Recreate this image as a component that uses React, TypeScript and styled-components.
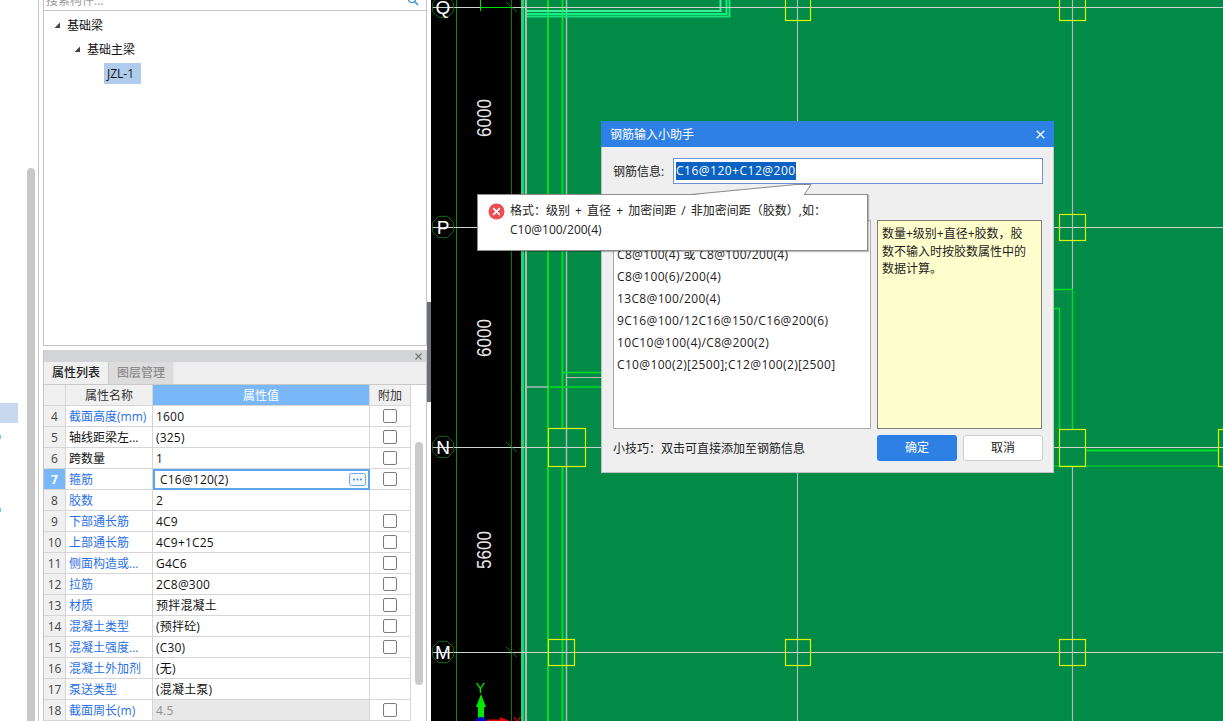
import React from "react";
import styled, { createGlobalStyle } from "styled-components";

const Global = createGlobalStyle`
  html, body { margin: 0; padding: 0; background: #fff; }
  body { font-family: "Open Sans", "Noto Sans CJK SC", sans-serif; font-size: 12px; color: #222; }
  * { box-sizing: border-box; }
`;

const Page = styled.div`
  width: 1223px;
  height: 721px;
  display: flex;
  overflow: hidden;
`;

const Strip = styled.div`
  width: 39px;
  height: 721px;
  border-right: 1px solid #c6c6c6;
  display: flex;
  background: #fff;
`;
const StripList = styled.div`
  width: 27px;
  padding-top: 403px;
`;
const StripHighlight = styled.div`
  width: 18px;
  height: 20px;
  background: #c8d9ef;
`;
const StripMark = styled.div<{ $top: number }>`
  width: 1px;
  height: 4px;
  margin-top: ${(p) => p.$top}px;
  background: #5fd0f5;
`;
const StripThumb = styled.div`
  width: 8px;
  height: 553px;
  margin-top: 168px;
  background: #c8c8c8;
  border-radius: 4px 4px 0 0;
`;

const Side = styled.div`
  width: 388px;
  height: 721px;
  padding-left: 4px;
  background: #fff;
  flex: none;
`;

const TreePanel = styled.div`
  width: 384px;
  height: 346px;
  border: 1px solid #c4c4c4;
  border-top: none;
`;
const SearchBar = styled.div`
  height: 11px;
  border-bottom: 1px solid #c4c4c4;
  overflow: hidden;
  display: flex;
  align-items: flex-end;
  justify-content: space-between;
  padding: 0 7px 1px 2px;
  color: #9a9a9a;
  line-height: 16px;
  white-space: nowrap;
`;
const SearchGlyph = styled.svg`
  width: 12px;
  height: 12px;
  flex: none;
  margin-bottom: 3px;
`;
const TreeBody = styled.div`
  padding-top: 2px;
`;
const TreeRow = styled.div<{ $indent: number }>`
  height: 24px;
  display: flex;
  align-items: center;
  padding-left: ${(p) => p.$indent}px;
  color: #111;
`;
const Caret = styled.svg`
  width: 7px;
  height: 7px;
  margin-right: 6px;
  flex: none;
`;
const TreeSelected = styled.span`
  display: block;
  height: 21px;
  line-height: 21px;
  padding: 0 3px;
  background: #b0ccec;
  width: 37px;
`;

const PropPanel = styled.div`
  width: 384px;
  margin-top: 4px;
  border-left: 1px solid #c4c4c4;
  border-right: 1px solid #c4c4c4;
`;
const PanelTitle = styled.div`
  height: 12px;
  background: #d3d4d8;
  display: flex;
  align-items: center;
  justify-content: flex-end;
  padding-right: 4px;
`;
const SmallClose = styled.svg`
  width: 7px;
  height: 7px;
`;
const TabBar = styled.div`
  height: 23px;
  background: #eeeeee;
  border-bottom: 1px solid #c9c9c9;
  display: flex;
`;
const Tab = styled.div<{ $active?: boolean }>`
  width: 65px;
  height: 22px;
  line-height: 22px;
  text-align: center;
  background: ${(p) => (p.$active ? "#f0f0f0" : "#dcdcdc")};
  color: ${(p) => (p.$active ? "#222" : "#8c8c8c")};
  font-weight: 500;
  border-right: 1px solid ${(p) => (p.$active ? "#c9c9c9" : "#e8e8e8")};
`;
const TableWrap = styled.div`
  display: flex;
  background: #fff;
`;
const Table = styled.div`
  width: 367px;
  display: grid;
  grid-template-columns: 22px 87px 217px 41px;
  grid-auto-rows: 21px;
`;
const Cell = styled.div`
  border-right: 1px solid #d6d6d6;
  border-bottom: 1px solid #d6d6d6;
  display: flex;
  align-items: center;
  white-space: nowrap;
  overflow: hidden;
`;
const HeadCell = styled(Cell)<{ $accent?: boolean }>`
  justify-content: center;
  background: ${(p) => (p.$accent ? "#7ab7f8" : "#f0f0f0")};
  color: ${(p) => (p.$accent ? "#fff" : "#333")};
`;
const IndexCell = styled(Cell)<{ $current?: boolean }>`
  justify-content: center;
  background: ${(p) => (p.$current ? "#7ab7f8" : "#f0f0f0")};
  color: ${(p) => (p.$current ? "#fff" : "#444")};
  font-weight: ${(p) => (p.$current ? 700 : 400)};
`;
const NameCell = styled(Cell)<{ $link?: boolean }>`
  padding-left: 3px;
  color: ${(p) => (p.$link ? "#2b6fe6" : "#111")};
`;
const ValueCell = styled(Cell)<{ $locked?: boolean }>`
  padding-left: 3px;
  letter-spacing: 0.2px;
  background: ${(p) => (p.$locked ? "#e8e8e8" : "#fff")};
  color: ${(p) => (p.$locked ? "#8f8f8f" : "#111")};
`;
const EditCell = styled(Cell)`
  border: 2px solid #5fa3f2;
  padding: 0 2px 0 5px;
  justify-content: space-between;
  letter-spacing: 0.2px;
  color: #111;
`;
const MoreButton = styled.svg`
  width: 17px;
  height: 13px;
  flex: none;
`;
const ExtraCell = styled(Cell)`
  justify-content: center;
  background: #fff;
`;
const Check = styled.span`
  width: 14px;
  height: 14px;
  border: 1px solid #7c7c7c;
  border-radius: 2px;
  background: #fff;
`;
const TableScroll = styled.div`
  flex: 1;
  padding: 57px 0 0 4px;
`;
const TableThumb = styled.div`
  width: 8px;
  height: 243px;
  border-radius: 4px;
  background: #cacaca;
`;

const Splitter = styled.div`
  width: 4px;
  height: 721px;
  background: #fff;
  padding-top: 302px;
  flex: none;
`;
const SplitterHandle = styled.div`
  height: 100px;
  background: #6a7078;
`;

const Canvas = styled.div`
  position: relative;
  flex: 1;
  height: 721px;
  background: #000;
  overflow: hidden;
`;
const Drawing = styled.svg`
  display: block;
  width: 792px;
  height: 721px;
`;

const Dialog = styled.div`
  position: absolute;
  left: 170px;
  top: 121px;
  width: 453px;
  height: 352px;
  background: #efefef;
  border: 1px solid #c2c2c2;
  border-top: none;
`;
const DialogTitle = styled.div`
  height: 26px;
  margin: 0 -1px;
  background: #2f80e4;
  color: #fff;
  display: flex;
  align-items: center;
  justify-content: space-between;
  padding: 0 9px 0 9px;
`;
const DialogClose = styled.svg`
  width: 9px;
  height: 9px;
`;
const DialogBody = styled.div`
  padding: 11px 10px 0 11px;
`;
const InfoRow = styled.div`
  display: flex;
  align-items: center;
  height: 26px;
  color: #222;
`;
const InfoLabel = styled.span`
  width: 60px;
  flex: none;
`;
const InfoInput = styled.div`
  flex: 1;
  height: 26px;
  background: #fff;
  border: 1px solid #6f8fd6;
  padding-left: 2px;
  display: flex;
  align-items: center;
`;
const Selected = styled.span`
  background: #0a63c2;
  color: #fff;
  line-height: 18px;
  letter-spacing: 0.5px;
`;
const Panes = styled.div`
  margin-top: 36px;
  display: grid;
  grid-template-columns: 258px 165px;
  gap: 6px;
  height: 209px;
`;
const ExampleList = styled.div`
  background: #fff;
  border: 1px solid #ababab;
  padding: 23px 0 0 3px;
  color: #222;
`;
const Example = styled.div`
  height: 22px;
  line-height: 21px;
  white-space: nowrap;
  letter-spacing: 0.35px;
`;
const HintBox = styled.div`
  background: #ffffcd;
  border: 1px solid #808080;
  padding: 4px 4px;
  line-height: 17.5px;
  color: #222;
`;
const DialogFooter = styled.div`
  margin-top: 6px;
  height: 26px;
  display: grid;
  grid-template-columns: 264px 80px 80px;
  align-items: center;
  color: #222;
`;
const PrimaryButton = styled.div`
  height: 26px;
  line-height: 26px;
  text-align: center;
  background: #2f80e4;
  color: #fff;
  border-radius: 3px;
`;
const SecondaryButton = styled.div`
  height: 26px;
  line-height: 24px;
  text-align: center;
  margin-left: 6px;
  width: 80px;
  background: #fff;
  border: 1px solid #cfcfcf;
  border-radius: 3px;
`;

const Tooltip = styled.div`
  position: absolute;
  left: 46px;
  top: 194px;
  width: 391px;
  height: 57px;
  background: #fff;
  border: 1px solid #8c8c8c;
  box-shadow: 1px 1px 1px rgba(0, 0, 0, 0.25);
  padding: 6px 0 0 32px;
  line-height: 19px;
  word-spacing: 2px;
  color: #222;
  white-space: nowrap;
`;
const TooltipIcon = styled.svg`
  position: absolute;
  left: 10px;
  top: 8px;
  width: 17px;
  height: 17px;
`;
const TooltipTail = styled.svg`
  position: absolute;
  left: 213px;
  top: -11px;
  width: 122px;
  height: 12px;
`;

type Prop = { n: number; name: string; value: string; link: boolean; check: boolean; edit?: boolean; locked?: boolean };

const rows: Prop[] = [
  { n: 4, name: "截面高度(mm)", value: "1600", link: true, check: true },
  { n: 5, name: "轴线距梁左...", value: "(325)", link: false, check: true },
  { n: 6, name: "跨数量", value: "1", link: false, check: true },
  { n: 7, name: "箍筋", value: "C16@120(2)", link: true, check: true, edit: true },
  { n: 8, name: "胶数", value: "2", link: true, check: false },
  { n: 9, name: "下部通长筋", value: "4C9", link: true, check: true },
  { n: 10, name: "上部通长筋", value: "4C9+1C25", link: true, check: true },
  { n: 11, name: "侧面构造或...", value: "G4C6", link: true, check: true },
  { n: 12, name: "拉筋", value: "2C8@300", link: true, check: true },
  { n: 13, name: "材质", value: "预拌混凝土", link: true, check: true },
  { n: 14, name: "混凝土类型", value: "(预拌砼)", link: true, check: true },
  { n: 15, name: "混凝土强度...", value: "(C30)", link: true, check: true },
  { n: 16, name: "混凝土外加剂", value: "(无)", link: true, check: false },
  { n: 17, name: "泵送类型", value: "(混凝土泵)", link: true, check: false },
  { n: 18, name: "截面周长(m)", value: "4.5", link: true, check: true, locked: true },
];

const examples = [
  "C8@100(4) 或 C8@100/200(4)",
  "C8@100(6)/200(4)",
  "13C8@100/200(4)",
  "9C16@100/12C16@150/C16@200(6)",
  "10C10@100(4)/C8@200(2)",
  "C10@100(2)[2500];C12@100(2)[2500]",
];

const CANVAS_GREEN = "#028a47";
const BRIGHT = "#00dc28";
const GRAY = "#aebcb2";
const YELLOW = "#dcf400";

const axes = [
  { label: "Q", y: 7 },
  { label: "P", y: 227 },
  { label: "N", y: 447 },
  { label: "M", y: 652 },
];

const spans = [
  { label: "6000", y: 118 },
  { label: "6000", y: 338 },
  { label: "5600", y: 550 },
];

const squares = [
  [785, -6, 25, 26],
  [1059, -6, 26, 26],
  [785, 214, 25, 26],
  [1059, 214, 26, 26],
  [548, 428, 37, 38],
  [1059, 429, 26, 37],
  [1218, 429, 26, 37],
  [548, 639, 26, 26],
  [785, 639, 25, 26],
  [1059, 639, 26, 26],
];

function octagon(cx: number, cy: number, r: number) {
  const pts: string[] = [];
  for (let i = 0; i < 8; i++) {
    const a = Math.PI / 8 + (i * Math.PI) / 4;
    pts.push(`${cx + r * Math.cos(a)},${cy + r * Math.sin(a)}`);
  }
  return pts.join(" ");
}

function CadDrawing() {
  return (
    <Drawing viewBox="431 0 792 721">
      <rect x="431" y="0" width="91" height="721" fill="#000" />
      <rect x="522" y="0" width="701" height="721" fill={CANVAS_GREEN} />

      <line x1="456.5" y1="0" x2="456.5" y2="721" stroke="#0a8a0a" />
      <line x1="511.5" y1="0" x2="511.5" y2="721" stroke="#0a7a0a" />
      <rect x="521" y="0" width="3" height="721" fill="#19d873" />
      <rect x="525" y="0" width="2" height="721" fill={GRAY} />
      <rect x="547" y="0" width="2" height="721" fill={BRIGHT} />
      <line x1="562.5" y1="0" x2="562.5" y2="428" stroke={BRIGHT} strokeWidth="2" />
      <line x1="562.5" y1="466" x2="562.5" y2="721" stroke={BRIGHT} strokeWidth="2" />
      <line x1="566.5" y1="0" x2="566.5" y2="721" stroke={GRAY} strokeWidth="1.5" />
      <line x1="797.5" y1="0" x2="797.5" y2="721" stroke={GRAY} strokeWidth="1.2" />
      <line x1="1072.5" y1="0" x2="1072.5" y2="289" stroke={GRAY} strokeWidth="1.2" />
      <line x1="1072.5" y1="466" x2="1072.5" y2="721" stroke={GRAY} strokeWidth="1.2" />

      <path d="M527 11 H720.5 V0" fill="none" stroke="#3cf09a" strokeWidth="2" />
      <path d="M527 14 H726.5 V0" fill="none" stroke="#10f080" strokeWidth="2" />
      <path d="M527 16.5 H729.5 V0" fill="none" stroke="#18e07a" strokeWidth="2" />

      <path d="M563 372.5 H601" stroke={BRIGHT} strokeWidth="1.5" fill="none" />
      <path d="M566 377.5 H601" stroke={GRAY} fill="none" />
      <path d="M526 387 H548" stroke={GRAY} strokeWidth="1.5" fill="none" />
      <path d="M548 387 H601" stroke={BRIGHT} strokeWidth="1.5" fill="none" />
      <path d="M1054 289.5 H1072.5 V429" stroke={BRIGHT} strokeWidth="1.5" fill="none" />
      <path d="M1054 308.5 H1059.5 V429" stroke={BRIGHT} strokeWidth="1.5" fill="none" />
      <path d="M1085 450.5 H1218" stroke={BRIGHT} strokeWidth="2" fill="none" />
      <path d="M1054 466 H1218" stroke={BRIGHT} fill="none" />

      {axes.map((a) => (
        <g key={a.label}>
          <line x1="432" y1={a.y + 0.5} x2="1223" y2={a.y + 0.5} stroke="#ccd2cc" />
          <polygon points={octagon(443, a.y, 11.5)} fill="none" stroke="#0c6a0c" />
          <line x1="506" y1={a.y - 5} x2="517" y2={a.y + 5} stroke="#0a7a0a" />
          <text
            x="443"
            y={a.y + 7}
            fill="#fff"
            fontFamily="Liberation Sans, sans-serif"
            fontSize="19"
            textAnchor="middle"
          >
            {a.label}
          </text>
        </g>
      ))}
      <path d="M480.5 0 V11 M480 7.5 H511" stroke="#00e000" fill="none" />

      {squares.map(([x, y, w, h]) => (
        <rect key={`${x}-${y}`} x={x + 0.5} y={y + 0.5} width={w} height={h} fill="none" stroke={YELLOW} strokeWidth="1.2" />
      ))}

      {spans.map((s) => (
        <text
          key={s.y}
          transform={`translate(491 ${s.y}) rotate(-90)`}
          fill="#e8e8e8"
          fontFamily="Liberation Sans, sans-serif"
          fontSize="20"
          textAnchor="middle"
          textLength="38"
          lengthAdjust="spacingAndGlyphs"
        >
          {s.label}
        </text>
      ))}

      <text x="480.5" y="693" fill="#00e800" fontFamily="Liberation Sans, sans-serif" fontSize="14" textAnchor="middle">
        Y
      </text>
      <polygon points="481,694 486,707 476,707" fill="#00e800" />
      <rect x="478" y="706" width="6" height="12" fill="#00e800" />
      <circle cx="481" cy="723" r="6" fill="#0000d0" />
      <path d="M487 720.5 H502" stroke="#e00000" strokeWidth="2" />
      <polygon points="500,717 510,721 500,725" fill="#e00000" />
      <text x="517" y="727" fill="#e00000" fontFamily="Liberation Sans, sans-serif" fontSize="14" textAnchor="middle">
        X
      </text>
    </Drawing>
  );
}

export default function App() {
  return (
    <Page>
      <Global />
      <Strip>
        <StripList>
          <StripHighlight />
          <StripMark $top={12} />
          <StripMark $top={69} />
        </StripList>
        <StripThumb />
      </Strip>
      <Side>
        <TreePanel>
          <SearchBar>
            <span>搜索构件...</span>
            <SearchGlyph viewBox="0 0 12 12">
              <circle cx="5" cy="5" r="3.6" fill="none" stroke="#3d96d6" strokeWidth="1.4" />
              <line x1="7.8" y1="7.8" x2="11" y2="11" stroke="#3d96d6" strokeWidth="1.6" />
            </SearchGlyph>
          </SearchBar>
          <TreeBody>
            <TreeRow $indent={10}>
              <Caret viewBox="0 0 7 7">
                <polygon points="6,0.5 6,6 0.5,6" fill="#444" />
              </Caret>
              基础梁
            </TreeRow>
            <TreeRow $indent={30}>
              <Caret viewBox="0 0 7 7">
                <polygon points="6,0.5 6,6 0.5,6" fill="#444" />
              </Caret>
              基础主梁
            </TreeRow>
            <TreeRow $indent={60}>
              <TreeSelected>JZL-1</TreeSelected>
            </TreeRow>
          </TreeBody>
        </TreePanel>
        <PropPanel>
          <PanelTitle>
            <SmallClose viewBox="0 0 7 7">
              <path d="M0.5 0.5 L6.5 6.5 M6.5 0.5 L0.5 6.5" stroke="#777" strokeWidth="1.2" />
            </SmallClose>
          </PanelTitle>
          <TabBar>
            <Tab $active>属性列表</Tab>
            <Tab>图层管理</Tab>
          </TabBar>
          <TableWrap>
            <Table>
              <HeadCell />
              <HeadCell>属性名称</HeadCell>
              <HeadCell $accent>属性值</HeadCell>
              <HeadCell>附加</HeadCell>
              {rows.map((r) => (
                <React.Fragment key={r.n}>
                  <IndexCell $current={r.edit}>{r.n}</IndexCell>
                  <NameCell $link={r.link}>{r.name}</NameCell>
                  {r.edit ? (
                    <EditCell>
                      {r.value}
                      <MoreButton viewBox="0 0 17 13">
                        <rect x="0.5" y="0.5" width="16" height="12" rx="2" fill="#f2f7fd" stroke="#6aa8ee" />
                        <circle cx="5" cy="6.5" r="1" fill="#4a8fdc" />
                        <circle cx="8.5" cy="6.5" r="1" fill="#4a8fdc" />
                        <circle cx="12" cy="6.5" r="1" fill="#4a8fdc" />
                      </MoreButton>
                    </EditCell>
                  ) : (
                    <ValueCell $locked={r.locked}>{r.value}</ValueCell>
                  )}
                  <ExtraCell>{r.check && <Check />}</ExtraCell>
                </React.Fragment>
              ))}
            </Table>
            <TableScroll>
              <TableThumb />
            </TableScroll>
          </TableWrap>
        </PropPanel>
      </Side>
      <Splitter>
        <SplitterHandle />
      </Splitter>
      <Canvas>
        <CadDrawing />
        <Dialog>
          <DialogTitle>
            钢筋输入小助手
            <DialogClose viewBox="0 0 9 9">
              <path d="M0.7 0.7 L8.3 8.3 M8.3 0.7 L0.7 8.3" stroke="#fff" strokeWidth="1.3" />
            </DialogClose>
          </DialogTitle>
          <DialogBody>
            <InfoRow>
              <InfoLabel>钢筋信息:</InfoLabel>
              <InfoInput>
                <Selected>C16@120+C12@200</Selected>
              </InfoInput>
            </InfoRow>
            <Panes>
              <ExampleList>
                {examples.map((e) => (
                  <Example key={e}>{e}</Example>
                ))}
              </ExampleList>
              <HintBox>
                数量+级别+直径+胶数，胶
                <br />
                数不输入时按胶数属性中的
                <br />
                数据计算。
              </HintBox>
            </Panes>
            <DialogFooter>
              <span>小技巧：双击可直接添加至钢筋信息</span>
              <PrimaryButton>确定</PrimaryButton>
              <SecondaryButton>取消</SecondaryButton>
            </DialogFooter>
          </DialogBody>
        </Dialog>
        <Tooltip>
          <TooltipTail viewBox="0 0 122 12">
            <polygon points="0,11 105,1 120,1 113,11" fill="#fff" />
            <path d="M0 10.5 L105 0.5 H120 L113 11" fill="none" stroke="#8c8c8c" />
          </TooltipTail>
          <TooltipIcon viewBox="0 0 17 17">
            <circle cx="8.5" cy="8.5" r="8" fill="#ee4b55" />
            <path d="M5.2 5.2 L11.8 11.8 M11.8 5.2 L5.2 11.8" stroke="#fff" strokeWidth="1.7" />
          </TooltipIcon>
          格式：级别 + 直径 + 加密间距 / 非加密间距（胶数）,如：
          <br />
          C10@100/200(4)
        </Tooltip>
      </Canvas>
    </Page>
  );
}
